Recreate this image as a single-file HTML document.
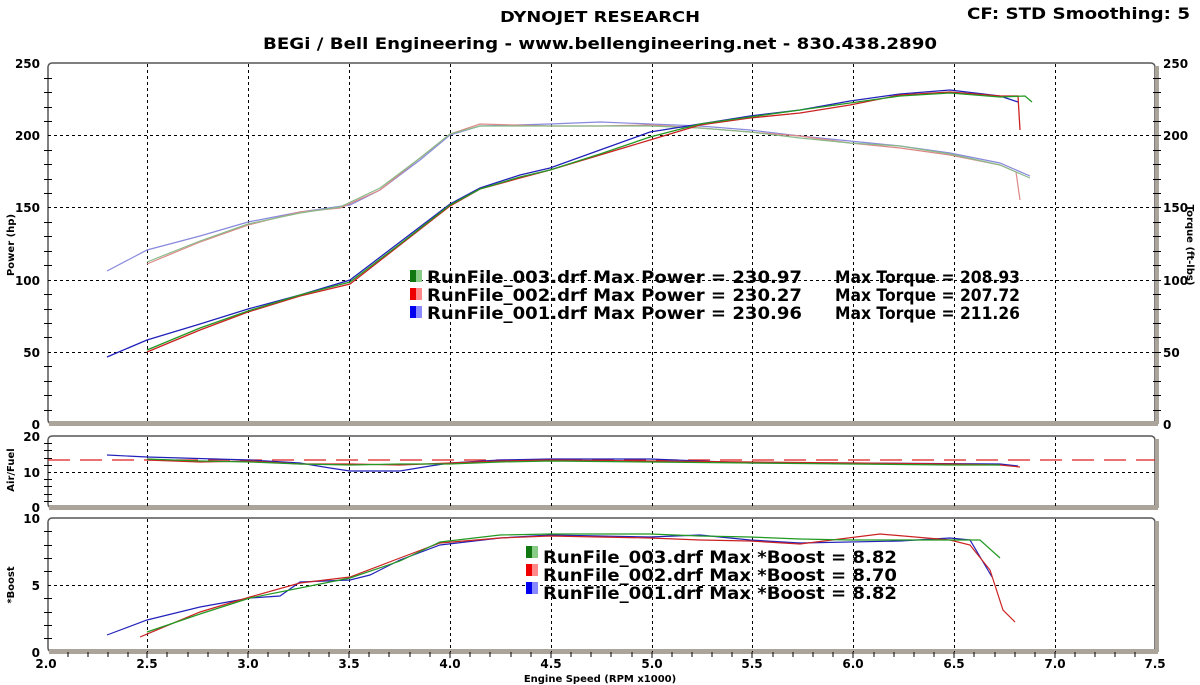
<!DOCTYPE html>
<html><head><meta charset="utf-8"><style>
html,body{margin:0;padding:0;background:#fff;width:1200px;height:685px;overflow:hidden}
svg{display:block}
text{font-family:"DejaVu Sans","Liberation Sans",sans-serif;font-weight:bold;fill:#000}
</style></head><body>
<svg width="1200" height="685" viewBox="0 0 1200 685" xmlns="http://www.w3.org/2000/svg">
<text x="500" y="22" font-size="15" textLength="200" lengthAdjust="spacingAndGlyphs">DYNOJET RESEARCH</text>
<text x="263" y="49" font-size="16" textLength="674" lengthAdjust="spacingAndGlyphs">BEGi / Bell Engineering - www.bellengineering.net - 830.438.2890</text>
<text x="967" y="19" font-size="16" textLength="223" lengthAdjust="spacingAndGlyphs">CF: STD  Smoothing: 5</text>

<g fill="none">
<rect x="48" y="63" width="1107" height="361" rx="4" stroke="#555" stroke-width="1.5"/>
<rect x="49" y="421" width="1109" height="5" fill="#aaa49a"/>
<rect x="1155" y="66" width="4" height="358" fill="#aaa49a"/>
<rect x="48" y="436" width="1107" height="72" rx="4" stroke="#555" stroke-width="1.5"/>
<rect x="49" y="505" width="1109" height="5" fill="#aaa49a"/>
<rect x="1155" y="439" width="4" height="69" fill="#aaa49a"/>
<rect x="48" y="518" width="1107" height="134" rx="4" stroke="#555" stroke-width="1.5"/>
<rect x="49" y="649" width="1109" height="5" fill="#aaa49a"/>
<rect x="1155" y="521" width="4" height="131" fill="#aaa49a"/>
</g>
<g stroke="#000" stroke-width="1" stroke-dasharray="3,3">
<path d="M147.5 64V424M248.5 64V424M349.5 64V424M450.5 64V424M551.5 64V424M652.5 64V424M752.5 64V424M853.5 64V424M954.5 64V424M1055.5 64V424"/>
<path d="M48 135.5H1155M48 207.5H1155M48 280.5H1155M48 352.5H1155"/>
<path d="M147.5 437V508M248.5 437V508M349.5 437V508M450.5 437V508M551.5 437V508M652.5 437V508M752.5 437V508M853.5 437V508M954.5 437V508M1055.5 437V508"/>
<path d="M48 472.5H1155"/>
<path d="M147.5 519V652M248.5 519V652M349.5 519V652M450.5 519V652M551.5 519V652M652.5 519V652M752.5 519V652M853.5 519V652M954.5 519V652M1055.5 519V652"/>
<path d="M48 585.5H1155"/>
</g>
<g stroke="#000" stroke-width="1">
<path d="M44 78.5h8M44 92.5h8M44 107.5h8M44 121.5h8M44 150.5h8M44 164.5h8M44 179.5h8M44 193.5h8M44 222.5h8M44 236.5h8M44 251.5h8M44 265.5h8M44 294.5h8M44 309.5h8M44 323.5h8M44 337.5h8M44 366.5h8M44 381.5h8M44 395.5h8M44 410.5h8"/>
<path d="M1153 78.5h8M1153 92.5h8M1153 107.5h8M1153 121.5h8M1153 135.5h8M1153 150.5h8M1153 164.5h8M1153 179.5h8M1153 193.5h8M1153 207.5h8M1153 222.5h8M1153 236.5h8M1153 251.5h8M1153 265.5h8M1153 280.5h8M1153 294.5h8M1153 309.5h8M1153 323.5h8M1153 337.5h8M1153 352.5h8M1153 366.5h8M1153 381.5h8M1153 395.5h8M1153 410.5h8"/>
<path d="M44 443.5h8M44 450.5h8M44 458.5h8M44 465.5h8M44 479.5h8M44 486.5h8M44 494.5h8M44 501.5h8"/>
<path d="M44 531.5h8M44 545.5h8M44 558.5h8M44 571.5h8M44 598.5h8M44 612.5h8M44 625.5h8M44 638.5h8"/>
<path d="M68 652v5M88 652v5M108 652v5M128 652v5M167 652v5M188 652v5M208 652v5M228 652v5M268 652v5M289 652v5M309 652v5M329 652v5M369 652v5M389 652v5M410 652v5M430 652v5M470 652v5M490 652v5M511 652v5M531 652v5M571 652v5M591 652v5M611 652v5M632 652v5M672 652v5M692 652v5M712 652v5M732 652v5M773 652v5M793 652v5M813 652v5M833 652v5M874 652v5M894 652v5M914 652v5M934 652v5M974 652v5M995 652v5M1015 652v5M1035 652v5M1075 652v5M1095 652v5M1115 652v5M1135 652v5M147 652v6M248 652v6M349 652v6M450 652v6M551 652v6M652 652v6M752 652v6M853 652v6M954 652v6M1055 652v6"/>
</g>
<g font-size="12" text-anchor="end">
<text x="40" y="68">250</text><text x="40" y="140">200</text><text x="40" y="212">150</text><text x="40" y="285">100</text><text x="40" y="357">50</text><text x="40" y="429">0</text>
<text x="40" y="441">20</text><text x="40" y="477">10</text><text x="40" y="512">0</text>
<text x="40" y="523">10</text><text x="40" y="590">5</text><text x="40" y="657">0</text>
</g>
<g font-size="12">
<text x="1163" y="68">250</text><text x="1163" y="140">200</text><text x="1163" y="212">150</text><text x="1163" y="285">100</text><text x="1163" y="357">50</text><text x="1163" y="429">0</text>
</g>
<g font-size="12" text-anchor="middle">
<text x="46" y="668">2.0</text><text x="147" y="668">2.5</text><text x="248" y="668">3.0</text><text x="349" y="668">3.5</text><text x="450" y="668">4.0</text><text x="551" y="668">4.5</text><text x="652" y="668">5.0</text><text x="752" y="668">5.5</text><text x="853" y="668">6.0</text><text x="954" y="668">6.5</text><text x="1055" y="668">7.0</text><text x="1155" y="668">7.5</text>
<text x="600" y="682" font-size="10">Engine Speed (RPM x1000)</text>
</g>
<text transform="translate(14,245) rotate(-90)" font-size="10" text-anchor="middle">Power (hp)</text>
<text transform="translate(14,470) rotate(-90)" font-size="10" text-anchor="middle">Air/Fuel</text>
<text transform="translate(14,585) rotate(-90)" font-size="10" text-anchor="middle">*Boost</text>
<text transform="translate(1187,245) rotate(90)" font-size="10" text-anchor="middle">Torque (ft-lbs)</text>

<g fill="none" stroke-width="1.2">
<path stroke="#8888dd" d="M107 271L147 250L200 236L248 222L300 212L350 205L380 190L420 160L450 135L480 126L550 124L600 122L650 124L700 126L750 130L800 136L850 141L900 146L950 153L1000 163L1030 176"/>
<path stroke="#dd8888" d="M147 264L200 242L248 225L300 212L340 208L380 190L420 158L450 134L480 124L550 126L600 126L650 125L700 128L750 132L800 136L850 143L900 148L950 155L1000 165L1016 172L1020 200"/>
<path stroke="#88bb88" d="M147 262L200 241L248 224L300 213L340 207L380 188L420 158L450 134L480 126L550 126L600 126L650 126L700 128L750 132L800 138L850 143L900 146L950 154L1000 165L1030 178"/>
</g>
<g fill="none" stroke-width="1.3">
<path stroke="#2222bb" d="M107 357L147 340L200 324L248 309L300 295L350 280L400 242L450 204L480 188L520 175L550 168L600 150L650 132L700 124L750 116L800 110L850 101L900 94L950 90L1000 96L1018 102"/>
<path stroke="#cc2222" d="M147 352L200 330L248 312L300 296L350 284L400 245L450 206L480 189L520 178L550 170L600 155L650 140L700 125L750 118L800 113L850 105L900 95L950 92L1000 96L1018 96L1020 130"/>
<path stroke="#229922" d="M147 350L200 328L248 311L300 295L350 282L400 244L450 205L480 189L520 177L550 170L600 154L650 137L700 124L750 117L800 110L850 103L900 96L950 93L1000 97L1025 96L1032 102"/>
</g>
<path d="M48 460H1155" stroke="#dd2222" stroke-width="1.2" stroke-dasharray="22,10" fill="none"/>
<g fill="none" stroke-width="1.2">
<path stroke="#2222bb" d="M107 455L147 457L250 460L300 463L330 468L350 471L400 471L430 466L450 463L500 460L550 459L650 459L750 463L850 463L1000 464L1018 466"/>
<path stroke="#cc2222" d="M147 460L200 462L250 461L300 464L350 464L400 465L450 463L500 461L550 460L650 461L750 462L850 463L950 464L1000 465L1020 467"/>
<path stroke="#229922" d="M147 459L200 461L250 462L300 464L350 465L400 464L450 464L500 462L550 461L650 462L750 463L850 464L950 465L1000 465"/>
</g>
<g fill="none" stroke-width="1.2">
<path stroke="#2222bb" d="M107 635L147 620L200 607L250 598L280 596L300 582L350 580L370 575L400 560L440 545L500 538L550 535L650 537L700 535L750 540L800 543L900 541L950 538L970 540L992 577"/>
<path stroke="#cc2222" d="M140 637L200 612L250 597L300 583L350 577L400 558L440 543L500 538L550 536L650 538L700 540L750 541L800 544L880 534L950 540L970 545L990 570L1003 610L1015 622"/>
<path stroke="#229922" d="M147 632L200 614L250 598L300 588L350 578L400 561L440 542L500 535L550 534L650 534L700 536L750 537L800 539L850 540L950 540L980 540L1000 558"/>
</g>

<g font-size="17">
<rect x="410" y="270" width="6" height="12" fill="#117711"/><rect x="416" y="270" width="6" height="12" fill="#88cc88"/>
<rect x="410" y="288" width="6" height="12" fill="#ee0000"/><rect x="416" y="288" width="6" height="12" fill="#ff8888"/>
<rect x="410" y="306" width="6" height="12" fill="#0000ee"/><rect x="416" y="306" width="6" height="12" fill="#8888ff"/>
<text x="427" y="283" textLength="375" lengthAdjust="spacingAndGlyphs">RunFile_003.drf Max Power = 230.97</text><text x="835" y="283" textLength="185" lengthAdjust="spacingAndGlyphs">Max Torque = 208.93</text>
<text x="427" y="301" textLength="375" lengthAdjust="spacingAndGlyphs">RunFile_002.drf Max Power = 230.27</text><text x="835" y="301" textLength="185" lengthAdjust="spacingAndGlyphs">Max Torque = 207.72</text>
<text x="427" y="319" textLength="375" lengthAdjust="spacingAndGlyphs">RunFile_001.drf Max Power = 230.96</text><text x="835" y="319" textLength="185" lengthAdjust="spacingAndGlyphs">Max Torque = 211.26</text>
<rect x="526" y="546" width="6" height="12" fill="#117711"/><rect x="532" y="546" width="6" height="12" fill="#88cc88"/>
<rect x="526" y="564" width="6" height="12" fill="#ee0000"/><rect x="532" y="564" width="6" height="12" fill="#ff8888"/>
<rect x="526" y="582" width="6" height="12" fill="#0000ee"/><rect x="532" y="582" width="6" height="12" fill="#8888ff"/>
<text x="543" y="563" textLength="354" lengthAdjust="spacingAndGlyphs">RunFile_003.drf Max *Boost = 8.82</text>
<text x="543" y="581" textLength="354" lengthAdjust="spacingAndGlyphs">RunFile_002.drf Max *Boost = 8.70</text>
<text x="543" y="599" textLength="354" lengthAdjust="spacingAndGlyphs">RunFile_001.drf Max *Boost = 8.82</text>
</g>
</svg>
</body></html>
